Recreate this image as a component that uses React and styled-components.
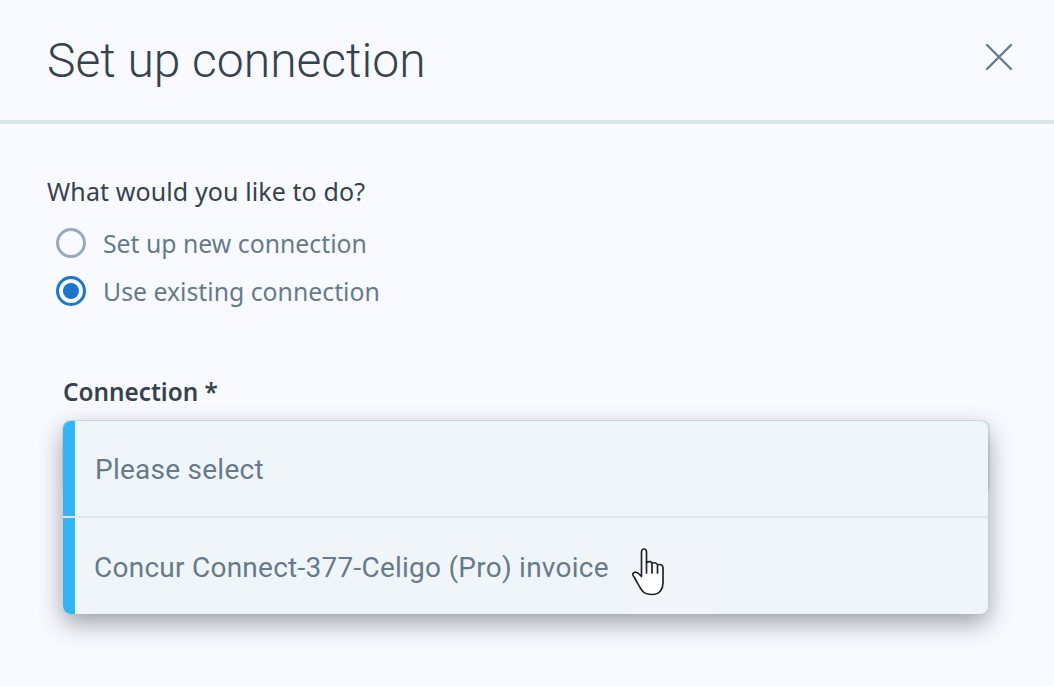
import styled, { createGlobalStyle } from "styled-components"

const Global = createGlobalStyle`
  html, body { margin: 0; padding: 0; height: 100%; overflow: hidden; }
  body { background: #f9faff; }
`

const Page = styled.div`
  width: 1054px;
  height: 686px;
  background: #f9faff;
  overflow: hidden;
`

const Header = styled.header`
  height: 120px;
  box-sizing: content-box;
  border-bottom: 4px solid #dbe4e9;
  padding: 0 40px 0 47px;
  display: flex;
  align-items: center;
  justify-content: space-between;
`

const Title = styled.h1`
  margin: 1px 0 0;
  font-family: Roboto, sans-serif;
  font-weight: 300;
  font-size: 48px;
  line-height: 54px;
  color: #36424e;
`

const Close = styled.button`
  border: 0;
  background: none;
  padding: 0;
  width: 30px;
  height: 30px;
  margin-top: -6px;
  display: flex;
  svg { display: block; }
`

const Body = styled.section`
  padding: 51px 0 0 47px;
`

const Question = styled.p`
  margin: 0 0 18px;
  font-family: "Noto Sans", sans-serif;
  font-size: 25px;
  letter-spacing: 0.1px;
  line-height: 32px;
  color: #36424e;
`

const Options = styled.div`
  display: flex;
  flex-direction: column;
  gap: 12px;
  padding-left: 9px;
`

const Option = styled.label`
  display: flex;
  align-items: center;
  gap: 17px;
  height: 36px;
  font-family: "Noto Sans", sans-serif;
  font-size: 24.8px;
  color: #677a8b;
`

const Radio = styled.span`
  width: 30px;
  height: 30px;
  box-sizing: border-box;
  border-radius: 50%;
  border: 3px solid ${p => (p.$checked ? "#1d76c9" : "#95abbd")};
  display: flex;
  align-items: center;
  justify-content: center;
  &::after {
    content: "";
    display: ${p => (p.$checked ? "block" : "none")};
    width: 16px;
    height: 16px;
    border-radius: 50%;
    background: #1d76c9;
  }
`

const Field = styled.div`
  margin: 67px 0 0 16px;
  width: 927px;
`

const FieldLabel = styled.div`
  font-family: "Noto Sans", sans-serif;
  font-weight: 600;
  font-size: 24.3px;
  line-height: 32px;
  color: #36424e;
  margin-bottom: 12px;
`

const Select = styled.div`
  position: relative;
  height: 74px;
  box-sizing: border-box;
  margin-left: -1px;
  border: 2px solid #dbe7ee;
  border-radius: 8px;
`

const Menu = styled.div`
  position: absolute;
  top: -1px;
  left: -1px;
  width: 925px;
  border-radius: 8px;
  overflow: hidden;
  background: #f0f5f9;
  box-shadow: 0 9px 24px rgba(40, 50, 60, 0.46);
`

const Item = styled.div`
  height: ${p => p.$height}px;
  box-sizing: border-box;
  display: flex;
  align-items: center;
  background: linear-gradient(to right, #33b5f1 12px, transparent 12px);
  padding: 2px 0 0 ${p => p.$indent}px;
  font-family: Roboto, sans-serif;
  font-size: 28px;
  letter-spacing: 0.25px;
  color: #677a8b;
  & + & {
    border-top: 2px solid #dce6ec;
  }
`

const CursorShade = styled.div`
  position: absolute;
  left: 568px;
  top: 126px;
  width: 84px;
  height: 63px;
  background: #f2f6fa;
`

const Cursor = styled.svg`
  position: absolute;
  left: 568px;
  top: 126px;
`

const Hand = () => (
  <Cursor width="38" height="50" viewBox="0 0 38 50">
    <path
      d="M4 31c-1.500-1.500-3-3-2-4.500 1.500-2 4-1.500 6 .5l2.500 2.500V5c0-4 5-4 5 0v10.500c3-1.500 5 -1 5.500 1 2.500-1.500 5-.5 5.500 1.500 2.500-1.200 5-.2 5.500 2.500V36c0 6-3.500 11.500-10.500 11.500-4.500 0-7.500-.5-10-3.500-2.500-3-5-8.500-8-13z"
      fill="#fff"
      stroke="#20232e"
      strokeWidth="1.700"
      strokeLinejoin="round"
    />
    <path d="M15.500 15.500V26M21 17.500V26M26.500 19V26" fill="none" stroke="#20232e" strokeWidth="1.700" strokeLinecap="round" />
  </Cursor>
)

export default function App() {
  return (
    <Page>
      <Global />
      <Header>
        <Title>Set up connection</Title>
        <Close aria-label="Close">
          <svg width="30" height="30" viewBox="0 0 30 30">
            <path d="M3 3l24 24M27 3L3 27" stroke="#677a8b" strokeWidth="2.400" strokeLinecap="round" />
          </svg>
        </Close>
      </Header>
      <Body>
        <Question>What would you like to do?</Question>
        <Options>
          <Option><Radio />Set up new connection</Option>
          <Option><Radio $checked />Use existing connection</Option>
        </Options>
        <Field>
          <FieldLabel>Connection *</FieldLabel>
          <Select>
            <Menu>
              <Item $height={95} $indent={32}>Please select</Item>
              <Item $height={98} $indent={31}>Concur Connect-377-Celigo (Pro) invoice</Item>
              <CursorShade />
              <Hand />
            </Menu>
          </Select>
        </Field>
      </Body>
    </Page>
  )
}
